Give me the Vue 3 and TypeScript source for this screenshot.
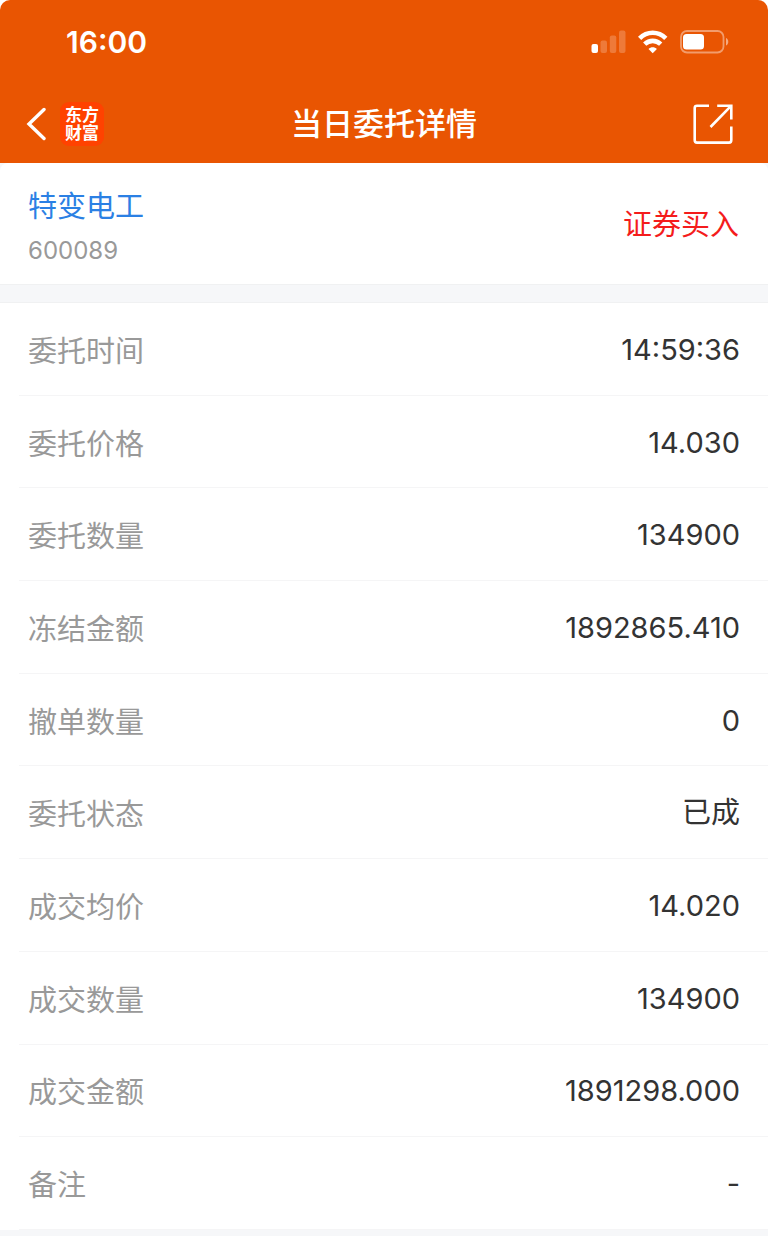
<script setup lang="ts">
interface DetailRow {
  label: string
  value: string
}

const stock = { name: '特变电工', code: '600089', side: '证券买入' }

const rows: DetailRow[] = [
  { label: '委托时间', value: '14:59:36' },
  { label: '委托价格', value: '14.030' },
  { label: '委托数量', value: '134900' },
  { label: '冻结金额', value: '1892865.410' },
  { label: '撤单数量', value: '0' },
  { label: '委托状态', value: '已成' },
  { label: '成交均价', value: '14.020' },
  { label: '成交数量', value: '134900' },
  { label: '成交金额', value: '1891298.000' },
  { label: '备注', value: '-' },
]
</script>

<template>
  <div class="page">
    <header class="top">
      <div class="status">
        <span class="clock time">16:00</span>
        <div class="indicators">
          <svg class="signal" width="35" height="24" viewBox="0 0 35 24" aria-hidden="true">
            <rect x="0.500" y="14" width="6.500" height="9" rx="2" fill="#fff" />
            <g fill="#fff" fill-opacity=".22">
              <rect x="9.500" y="10.500" width="6.500" height="12.500" rx="2" />
              <rect x="18.800" y="5.500" width="6.500" height="17.500" rx="2" />
              <rect x="28" y="0.500" width="6.500" height="22.500" rx="2" />
            </g>
          </svg>
          <svg class="wifi" width="30" height="24" viewBox="0 0 30 24" aria-hidden="true">
            <g fill="none" stroke="#fff" stroke-width="4.600">
              <path d="M1.600 8.400C9 .9 20.400 .9 27.800 8.400" />
              <path d="M6.700 14.200C11.300 9.700 18.100 9.700 22.700 14.200" />
            </g>
            <path d="M14.700 23.200 10.500 18.900C12.700 16.800 16.700 16.800 18.900 18.900Z" fill="#fff" />
          </svg>
          <svg class="battery" width="50" height="24" viewBox="0 0 50 24" aria-hidden="true">
            <rect x="1" y="1" width="42.500" height="21.500" rx="6" fill="none" stroke="#fff" stroke-opacity=".42" stroke-width="1.800" />
            <rect x="3" y="4" width="21" height="15.500" rx="3.500" fill="#fff" />
            <path d="M46 8C49 9 49 14.500 46 15.500Z" fill="#fff" fill-opacity=".5" />
          </svg>
        </div>
      </div>
      <nav class="nav">
        <div class="nav-left">
          <button class="icon-button" type="button" aria-label="返回">
            <svg width="20" height="34" viewBox="0 0 20 34" aria-hidden="true">
              <path d="M18 2.500 3 17 18 31.500" fill="none" stroke="#fff" stroke-width="3.400" stroke-linecap="round" />
            </svg>
          </button>
          <span class="logo"><span>东方</span><span>财富</span></span>
        </div>
        <h1 class="title">当日委托详情</h1>
        <button class="icon-button share" type="button" aria-label="分享">
          <svg width="40" height="40" viewBox="0 0 40 40" fill="none" stroke="#fff" stroke-width="2.600" aria-hidden="true">
            <path d="M16 1.700H4Q1.700 1.700 1.700 4V36Q1.700 38.600 4 38.600H36Q38.300 38.600 38.300 36V22.500" />
            <path d="M24.200 1.700H38.300V15.500M38.300 1.700 17.500 23" />
          </svg>
        </button>
      </nav>
    </header>

    <main class="content">
      <section class="summary">
        <div class="stock">
          <a class="stock-name" href="#">{{ stock.name }}</a>
          <span class="stock-code">{{ stock.code }}</span>
        </div>
        <span class="side">{{ stock.side }}</span>
      </section>
      <dl class="details">
        <div v-for="row in rows" :key="row.label" class="row">
          <dt>{{ row.label }}</dt>
          <dd :class="{ time: row.value.includes(':') }">{{ row.value }}</dd>
        </div>
      </dl>
    </main>
  </div>
</template>

<style>
body {
  margin: 0;
  background: #fff;
}
</style>

<style scoped>
.page {
  display: flex;
  flex-direction: column;
  min-height: 100vh;
  box-sizing: border-box;
  font-family: Inter, "Noto Sans CJK SC", sans-serif;
}

.top {
  background: #e95502;
  border-radius: 10px 10px 0 0;
}

.status {
  display: flex;
  align-items: center;
  justify-content: space-between;
  height: 84px;
  padding: 0 38px 0 66px;
}

.clock {
  color: #fff;
  font-size: 30px;
  font-weight: 600;
  line-height: 36px;
}

/* Raises the colon to the middle of the digits. */
.time {
  font-feature-settings: "case" 1;
}

.indicators {
  display: flex;
  gap: 12px;
}

.nav {
  display: grid;
  grid-template-columns: 1fr auto 1fr;
  align-items: center;
  height: 79px;
  padding: 0 26px;
}

.nav-left {
  display: flex;
  align-items: center;
  gap: 14px;
}

.icon-button {
  display: flex;
  padding: 0;
  border: 0;
  background: none;
  cursor: pointer;
}

.share {
  justify-self: end;
  padding: 0 9px;
}

.logo {
  display: flex;
  flex-direction: column;
  align-items: center;
  justify-content: center;
  width: 44px;
  height: 44px;
  border-radius: 9px;
  background: #ff4200;
  color: #fff;
  font-size: 17px;
  font-weight: 700;
  line-height: 18px;
}

.title {
  margin: 0;
  color: #fff;
  font-size: 31px;
  font-weight: 500;
  line-height: 40px;
}

.content {
  display: flex;
  flex: 1;
  flex-direction: column;
  padding-bottom: 6px;
  background: #f6f7f9;
}

.summary {
  display: flex;
  align-items: center;
  justify-content: space-between;
  padding: 18px 29px 15px 28px;
  border-bottom: 1px solid #f0f1f2;
  border-radius: 8px 8px 0 0;
  background: #fff;
}

.stock {
  display: flex;
  flex-direction: column;
  gap: 6px;
}

.stock-name {
  color: #2b80e4;
  font-family: "Noto Sans CJK SC", sans-serif;
  font-size: 29px;
  line-height: 46px;
  text-decoration: none;
}

.stock-code {
  color: #999;
  font-size: 24px;
  line-height: 36px;
}

.side {
  color: #f41c1c;
  font-size: 29px;
  line-height: 42px;
}

.details {
  display: grid;
  flex: 1;
  grid-auto-rows: 1fr;
  margin: 17px 0 0;
  padding-left: 19px;
  border-top: 1px solid #f0f1f2;
  background: #fff;
}

.row {
  display: flex;
  align-items: center;
  justify-content: space-between;
  padding: 0 28px 0 9px;
  border-bottom: 1px solid #f5f5f6;
}

dt {
  color: #999;
  font-family: "Noto Sans CJK SC", sans-serif;
  font-size: 29px;
  line-height: 42px;
}

dd {
  margin: 0;
  padding-top: 2px;
  color: #333;
  font-size: 29px;
  line-height: 42px;
}
</style>
